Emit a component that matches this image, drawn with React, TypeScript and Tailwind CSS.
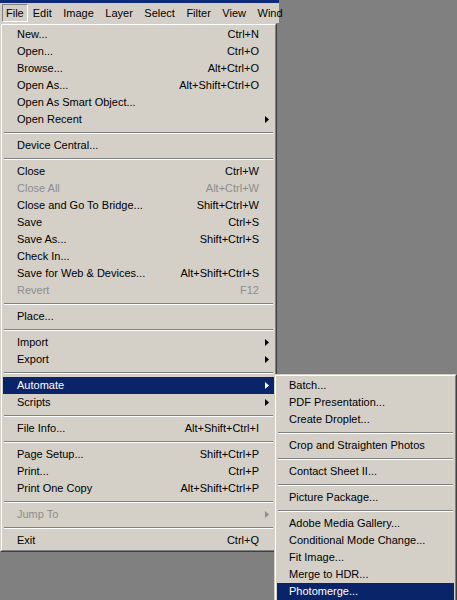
import React from "react";

type Item =
  | { sep: true }
  | { label: string; sc?: string; arrow?: boolean; disabled?: boolean; hl?: boolean };

const mainItems: Item[] = [
  { label: "New...", sc: "Ctrl+N" },
  { label: "Open...", sc: "Ctrl+O" },
  { label: "Browse...", sc: "Alt+Ctrl+O" },
  { label: "Open As...", sc: "Alt+Shift+Ctrl+O" },
  { label: "Open As Smart Object..." },
  { label: "Open Recent", arrow: true },
  { sep: true },
  { label: "Device Central..." },
  { sep: true },
  { label: "Close", sc: "Ctrl+W" },
  { label: "Close All", sc: "Alt+Ctrl+W", disabled: true },
  { label: "Close and Go To Bridge...", sc: "Shift+Ctrl+W" },
  { label: "Save", sc: "Ctrl+S" },
  { label: "Save As...", sc: "Shift+Ctrl+S" },
  { label: "Check In..." },
  { label: "Save for Web & Devices...", sc: "Alt+Shift+Ctrl+S" },
  { label: "Revert", sc: "F12", disabled: true },
  { sep: true },
  { label: "Place..." },
  { sep: true },
  { label: "Import", arrow: true },
  { label: "Export", arrow: true },
  { sep: true },
  { label: "Automate", arrow: true, hl: true },
  { label: "Scripts", arrow: true },
  { sep: true },
  { label: "File Info...", sc: "Alt+Shift+Ctrl+I" },
  { sep: true },
  { label: "Page Setup...", sc: "Shift+Ctrl+P" },
  { label: "Print...", sc: "Ctrl+P" },
  { label: "Print One Copy", sc: "Alt+Shift+Ctrl+P" },
  { sep: true },
  { label: "Jump To", arrow: true, disabled: true },
  { sep: true },
  { label: "Exit", sc: "Ctrl+Q" },
];

const subItems: Item[] = [
  { label: "Batch..." },
  { label: "PDF Presentation..." },
  { label: "Create Droplet..." },
  { sep: true },
  { label: "Crop and Straighten Photos" },
  { sep: true },
  { label: "Contact Sheet II..." },
  { sep: true },
  { label: "Picture Package..." },
  { sep: true },
  { label: "Adobe Media Gallery..." },
  { label: "Conditional Mode Change..." },
  { label: "Fit Image..." },
  { label: "Merge to HDR..." },
  { label: "Photomerge...", hl: true },
];

function Arrow({ color }: { color: string }) {
  return (
    <svg width="4" height="7" viewBox="0 0 4 7" className="block">
      <path d="M0 0 L4 3.5 L0 7 Z" fill={color} />
    </svg>
  );
}

function Sep() {
  return (
    <div className="h-[9px] flex flex-col justify-center px-[1px]">
      <div className="h-px bg-[#808080]" />
      <div className="h-px bg-white" />
    </div>
  );
}

function Row({ it, sub }: { it: Item; sub?: boolean }) {
  if ("sep" in it) return <Sep />;
  const color = it.hl ? "text-white" : it.disabled ? "text-[#8d8d8d]" : "text-black";
  const arrowColor = it.hl ? "#ffffff" : it.disabled ? "#8d8d8d" : "#000000";
  return (
    <div
      className={`h-[17px] flex items-center ${sub ? "pl-[12px]" : "pl-[14px]"} ${
        it.hl ? "bg-[#0a246a]" : ""
      } ${color}`}
    >
      <span className="flex-1 whitespace-nowrap">{it.label}</span>
      {it.sc && <span className="whitespace-nowrap">{it.sc}</span>}
      {!sub && (
        <span className="w-[15px] flex justify-end pr-[5px]">
          {it.arrow && <Arrow color={arrowColor} />}
        </span>
      )}
    </div>
  );
}

export default function App() {
  const bar = ["Edit", "Image", "Layer", "Select", "Filter", "View", "Wind"];
  return (
    <div
      className="relative w-[457px] h-[600px] overflow-hidden bg-[#808080] text-[11px] leading-none"
      style={{ fontFamily: "Tahoma, 'Liberation Sans', Arial, sans-serif" }}
    >
      {/* Title strip + menubar */}
      <div className="w-[279px]">
        <div className="h-[3px] bg-[#0c2a78]" />
        <div className="h-[20px] bg-[#d4d0c8] flex items-center pl-[2px]">
          <div className="h-[18px] flex items-center px-[3px] border border-t-[#808080] border-l-[#808080] border-b-white border-r-white">
            File
          </div>
          {bar.map((b) => (
            <div key={b} className="h-[18px] flex items-center pl-[5px] pr-[6.5px] whitespace-nowrap">
              {b}
            </div>
          ))}
        </div>
      </div>

      {/* File menu */}
      <div className="absolute left-0 top-[23px] w-[277px] bg-[#d4d0c8] border border-t-[#d4d0c8] border-l-[#d4d0c8] border-r-[#404040] border-b-[#404040]">
        <div className="border border-t-white border-l-white border-r-[#808080] border-b-[#808080] p-[1px]">
          {mainItems.map((it, i) => (
            <Row key={i} it={it} />
          ))}
        </div>
      </div>

      {/* Automate submenu */}
      <div className="absolute left-[274px] top-[374px] w-[183px] bg-[#d4d0c8] border border-t-[#d4d0c8] border-l-[#d4d0c8] border-r-[#404040] border-b-[#404040]">
        <div className="border border-t-white border-l-white border-r-[#808080] border-b-[#808080] p-[1px]">
          {subItems.map((it, i) => (
            <Row key={i} it={it} sub />
          ))}
        </div>
      </div>
    </div>
  );
}
